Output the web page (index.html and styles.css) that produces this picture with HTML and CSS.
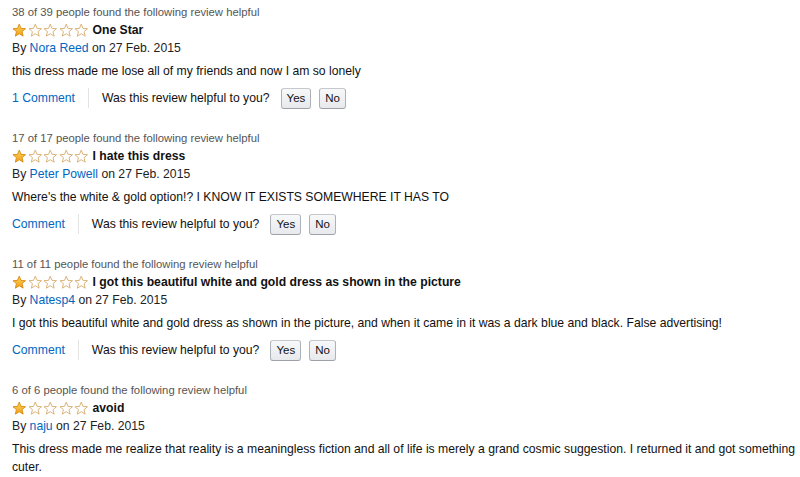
FILE: index.html
```html
<!DOCTYPE html>
<html>
<head>
<meta charset="utf-8">
<link rel="stylesheet" href="styles.css">
</head>
<body>
<svg width="0" height="0" class="defs">
  <defs>
    <linearGradient id="gold" x1="0" y1="0" x2="0" y2="1">
      <stop offset="0" stop-color="#ffd25a"/>
      <stop offset="1" stop-color="#f0a11e"/>
    </linearGradient>
    <symbol id="star" viewBox="0 0 16 16">
      <path d="M8 1.2 L9.9 5.9 L14.9 6.3 L11.1 9.5 L12.3 14.5 L8 11.8 L3.7 14.5 L4.9 9.5 L1.1 6.3 L6.1 5.9 Z"/>
    </symbol>
  </defs>
</svg>

<div class="review">
  <div class="helpful">38 of 39 people found the following review helpful</div>
  <div class="title-row">
    <span class="stars">
      <svg class="star full"><use href="#star"/></svg><svg class="star"><use href="#star"/></svg><svg class="star"><use href="#star"/></svg><svg class="star"><use href="#star"/></svg><svg class="star"><use href="#star"/></svg>
    </span>
    <span class="title">One Star</span>
  </div>
  <div class="byline">By <a class="link">Nora Reed</a> on 27 Feb. 2015</div>
  <div class="text">this dress made me lose all of my friends and now I am so lonely</div>
  <div class="actions">
    <a class="link">1 Comment</a>
    <span class="sep"></span>
    <span>Was this review helpful to you?</span>
    <button class="btn yes">Yes</button>
    <button class="btn">No</button>
  </div>
</div>

<div class="review">
  <div class="helpful">17 of 17 people found the following review helpful</div>
  <div class="title-row">
    <span class="stars">
      <svg class="star full"><use href="#star"/></svg><svg class="star"><use href="#star"/></svg><svg class="star"><use href="#star"/></svg><svg class="star"><use href="#star"/></svg><svg class="star"><use href="#star"/></svg>
    </span>
    <span class="title">I hate this dress</span>
  </div>
  <div class="byline">By <a class="link">Peter Powell</a> on 27 Feb. 2015</div>
  <div class="text">Where's the white &amp; gold option!? I KNOW IT EXISTS SOMEWHERE IT HAS TO</div>
  <div class="actions">
    <a class="link">Comment</a>
    <span class="sep"></span>
    <span>Was this review helpful to you?</span>
    <button class="btn yes">Yes</button>
    <button class="btn">No</button>
  </div>
</div>

<div class="review">
  <div class="helpful">11 of 11 people found the following review helpful</div>
  <div class="title-row">
    <span class="stars">
      <svg class="star full"><use href="#star"/></svg><svg class="star"><use href="#star"/></svg><svg class="star"><use href="#star"/></svg><svg class="star"><use href="#star"/></svg><svg class="star"><use href="#star"/></svg>
    </span>
    <span class="title">I got this beautiful white and gold dress as shown in the picture</span>
  </div>
  <div class="byline">By <a class="link">Natesp4</a> on 27 Feb. 2015</div>
  <div class="text">I got this beautiful white and gold dress as shown in the picture, and when it came in it was a dark blue and black. False advertising!</div>
  <div class="actions">
    <a class="link">Comment</a>
    <span class="sep"></span>
    <span>Was this review helpful to you?</span>
    <button class="btn yes">Yes</button>
    <button class="btn">No</button>
  </div>
</div>

<div class="review">
  <div class="helpful">6 of 6 people found the following review helpful</div>
  <div class="title-row">
    <span class="stars">
      <svg class="star full"><use href="#star"/></svg><svg class="star"><use href="#star"/></svg><svg class="star"><use href="#star"/></svg><svg class="star"><use href="#star"/></svg><svg class="star"><use href="#star"/></svg>
    </span>
    <span class="title">avoid</span>
  </div>
  <div class="byline">By <a class="link">naju</a> on 27 Feb. 2015</div>
  <div class="text">This dress made me realize that reality is a meaningless fiction and all of life is merely a grand cosmic suggestion. I returned it and got something cuter.</div>
</div>
</body>
</html>
```

FILE: styles.css
```css
html, body {
  margin: 0;
  padding: 0;
  background: #fff;
}
body {
  font-family: "Liberation Sans", Arial, sans-serif;
  font-size: 12.2px;
  color: #111;
  padding: 3px 2px 0 12px;
}
.defs {
  position: absolute;
  width: 0;
  height: 0;
}
.review {
  margin-bottom: 20px;
}
.helpful {
  font-size: 11.3px;
  line-height: 18px;
  color: #555;
}
.title-row {
  display: flex;
  align-items: center;
  height: 18px;
}
.stars {
  display: flex;
  gap: 1px;
  margin-right: 4px;
}
.star {
  width: 14.5px;
  height: 14.5px;
  fill: #fff;
  stroke: #d7ac6e;
  stroke-width: 1;
  stroke-linejoin: round;
}
.star.full {
  fill: url(#gold);
  stroke: #d98b10;
}
.title {
  font-weight: bold;
  color: #111;
}
.byline {
  line-height: 18px;
  color: #222;
}
.link {
  color: #0066c0;
  text-decoration: none;
}
.text {
  margin-top: 5px;
  line-height: 18px;
  color: #111;
}
.actions {
  margin-top: 7px;
  height: 22px;
  display: flex;
  align-items: center;
  color: #111;
}
.sep {
  width: 1px;
  height: 20px;
  background: #e3e3e3;
  margin: 0 13px;
}
.btn {
  font-family: "Liberation Sans", Arial, sans-serif;
  font-size: 11.5px;
  color: #111;
  height: 21px;
  padding: 0 5px;
  border: 1px solid #adb1b8;
  border-top-color: #c6c8cc;
  border-bottom-color: #9ea2a8;
  border-radius: 3px;
  background: linear-gradient(#f7f8fa, #e7e9ec);
  margin-left: 8px;
  line-height: 19px;
}
.btn.yes {
  margin-left: 11px;
}
```
